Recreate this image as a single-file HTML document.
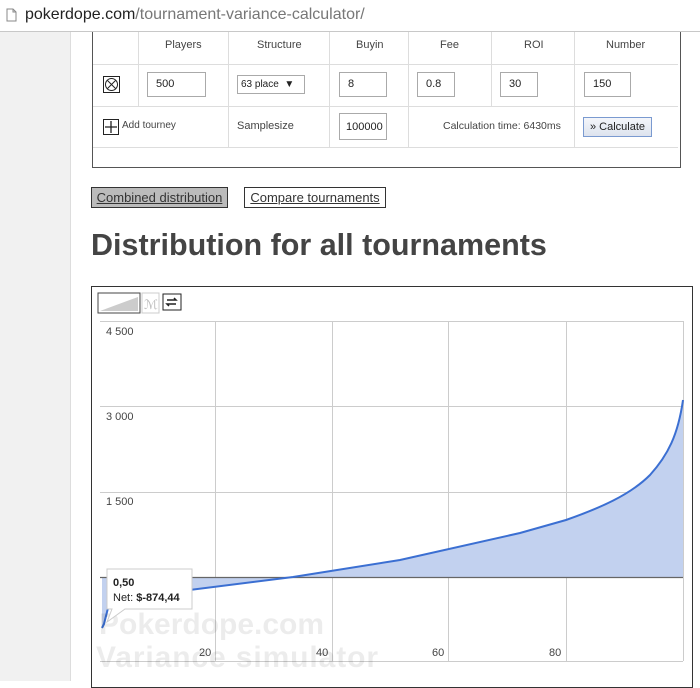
<!DOCTYPE html>
<html><head><meta charset="utf-8"><style>
body{margin:0;width:700px;height:681px;overflow:hidden;background:#fff;font-family:"Liberation Sans",Arial,sans-serif;position:relative}
.abs{position:absolute}
.bar{left:0;top:0;width:700px;height:31px;background:#fff;border-bottom:1px solid #c8c8c8}
.strip{left:0;top:32px;width:70px;height:649px;background:#f1f1f1;border-right:1px solid #ddd}
.t{font-size:11px;color:#444}
.inp{position:absolute;border:1px solid #aaa;background:#fff;font-size:11px;color:#222;padding-left:8px;box-sizing:border-box;line-height:22px;height:25px}
.vl{position:absolute;width:1px;background:#ddd}
.hl{position:absolute;height:1px;background:#ddd}
</style></head><body>
<div class="abs bar"></div>
<svg class="abs" style="left:6px;top:8px" width="11" height="14"><path d="M1 1h6l3 3v9H1z" fill="#fff" stroke="#888"/><path d="M7 1v3h3" fill="none" stroke="#888"/></svg>
<div class="abs" style="left:25px;top:6px;font-size:16px;color:#222">pokerdope.com<span style="color:#777">/tournament-variance-calculator/</span></div>
<div class="abs strip"></div>
<div class="abs" style="left:92px;top:32px;width:587px;height:135px;border:1px solid #555;border-top:none"></div>
<div class="hl" style="left:93px;top:64px;width:585px"></div>
<div class="hl" style="left:93px;top:106px;width:585px"></div>
<div class="hl" style="left:93px;top:147px;width:585px"></div>
<div class="vl" style="left:138px;top:32px;height:75px"></div>
<div class="vl" style="left:228px;top:32px;height:115px"></div>
<div class="vl" style="left:329px;top:32px;height:115px"></div>
<div class="vl" style="left:408px;top:32px;height:115px"></div>
<div class="vl" style="left:491px;top:32px;height:75px"></div>
<div class="vl" style="left:574px;top:32px;height:115px"></div>
<div class="abs t" style="left:165px;top:39px">Players</div>
<div class="abs t" style="left:257px;top:39px">Structure</div>
<div class="abs t" style="left:356px;top:39px">Buyin</div>
<div class="abs t" style="left:440px;top:39px">Fee</div>
<div class="abs t" style="left:524px;top:39px">ROI</div>
<div class="abs t" style="left:606px;top:39px">Number</div>
<svg class="abs" style="left:103px;top:76px" width="17" height="17"><rect x=".5" y=".5" width="16" height="16" fill="#fff" stroke="#222"/><circle cx="8.5" cy="8.5" r="6" fill="none" stroke="#222"/><path d="M4.5 4.5l8 8M12.5 4.5l-8 8" stroke="#222"/></svg>
<div class="inp" style="left:147px;top:72px;width:59px">500</div>
<div class="inp" style="left:237px;top:75px;width:68px;height:19px;line-height:17px;padding-left:3px;font-size:10px">63 place&nbsp;&nbsp;▼</div>
<div class="inp" style="left:339px;top:72px;width:48px">8</div>
<div class="inp" style="left:417px;top:72px;width:38px">0.8</div>
<div class="inp" style="left:500px;top:72px;width:38px">30</div>
<div class="inp" style="left:584px;top:72px;width:47px">150</div>
<svg class="abs" style="left:103px;top:119px" width="16" height="16"><rect x=".5" y=".5" width="15" height="15" fill="#fff" stroke="#222"/><path d="M8 2v12M2 8h12" stroke="#222" stroke-width="1.3"/></svg>
<div class="abs t" style="left:122px;top:120px;font-size:10px">Add tourney</div>
<div class="abs t" style="left:237px;top:120px">Samplesize</div>
<div class="inp" style="left:339px;top:113px;width:48px;padding-left:6px;height:27px;line-height:26px;overflow:hidden">100000</div>
<div class="abs t" style="left:443px;top:120px;font-size:10.5px">Calculation time: 6430ms</div>
<div class="abs" style="left:583px;top:117px;width:67px;height:18px;border:1px solid #7a9ad0;background:linear-gradient(#f4f6fa,#dde3ee);font-size:11px;line-height:18px;text-align:center;color:#222">» Calculate</div>
<div class="abs" style="left:91px;top:187px;width:135px;height:19px;border:1px solid #333;background:#bbb;font-size:13px;line-height:19px;text-align:center;color:#333;text-decoration:underline">Combined distribution</div>
<div class="abs" style="left:244px;top:187px;width:140px;height:19px;border:1px solid #333;background:#fff;font-size:13px;line-height:19px;text-align:center;color:#333;text-decoration:underline">Compare tournaments</div>
<div class="abs" style="left:91px;top:228px;font-size:30.5px;font-weight:bold;color:#444">Distribution for all tournaments</div>
<div class="abs" style="left:91px;top:286px;width:600px;height:400px;border:1px solid #333"></div>
<svg class="abs" style="left:0;top:0" width="700" height="681">
<rect x="98" y="293" width="42" height="20" fill="#fff" stroke="#444"/>
<path d="M100 311L138 297V311Z" fill="#ccc"/>
<rect x="142" y="293" width="17" height="20" fill="#fff" stroke="#ccc"/>
<text x="144" y="309" font-size="13" fill="#bbb" font-family="Liberation Serif">ℳ</text>
<rect x="163" y="294" width="18" height="16" fill="#fff" stroke="#222"/>
<path d="M167 300h9l-2-2M176 304h-9l2 2" fill="none" stroke="#222" stroke-width="1.5"/>
<g stroke="#ccc" stroke-width="1">
<line x1="100" y1="321.5" x2="683" y2="321.5"/><line x1="100" y1="406.5" x2="683" y2="406.5"/><line x1="100" y1="492.5" x2="683" y2="492.5"/><line x1="100" y1="661.5" x2="683" y2="661.5"/>
<line x1="215.5" y1="321" x2="215.5" y2="661"/><line x1="332.5" y1="321" x2="332.5" y2="661"/><line x1="448.5" y1="321" x2="448.5" y2="661"/><line x1="566.5" y1="321" x2="566.5" y2="661"/><line x1="683.5" y1="321" x2="683.5" y2="661"/>
</g>
<path d="M102 577V628L104 624L110 600L293 577L400 560L520 533L566 520C600 508 630 495 650 475C668 455 678 435 683 400V577Z" fill="#c2d1ef"/>
<line x1="100" y1="577.5" x2="683" y2="577.5" stroke="#666" stroke-width="1.3"/>
<path d="M102 628L104 624L110 600L293 577L400 560L520 533L566 520C600 508 630 495 650 475C668 455 678 435 683 400" fill="none" stroke="#3b6fd2" stroke-width="2"/>
<g font-size="11" fill="#444"><text x="106" y="335">4 500</text><text x="106" y="420">3 000</text><text x="106" y="505">1 500</text>
<text x="199" y="656">20</text><text x="316" y="656">40</text><text x="432" y="656">60</text><text x="549" y="656">80</text></g>
<g font-size="30" font-weight="bold" fill="#000" opacity=".07"><text x="99" y="634">Pokerdope.com</text><text x="96" y="667" textLength="282">Variance simulator</text></g>
<path d="M107 569H192V609H125L107 622L112 609H107Z" fill="#fff" stroke="#ccc"/>
<text x="113" y="586" font-size="11" font-weight="bold" fill="#222">0,50</text>
<text x="113" y="601" font-size="11" fill="#222">Net: <tspan font-weight="bold">$-874,44</tspan></text>
</svg>
</body></html>
